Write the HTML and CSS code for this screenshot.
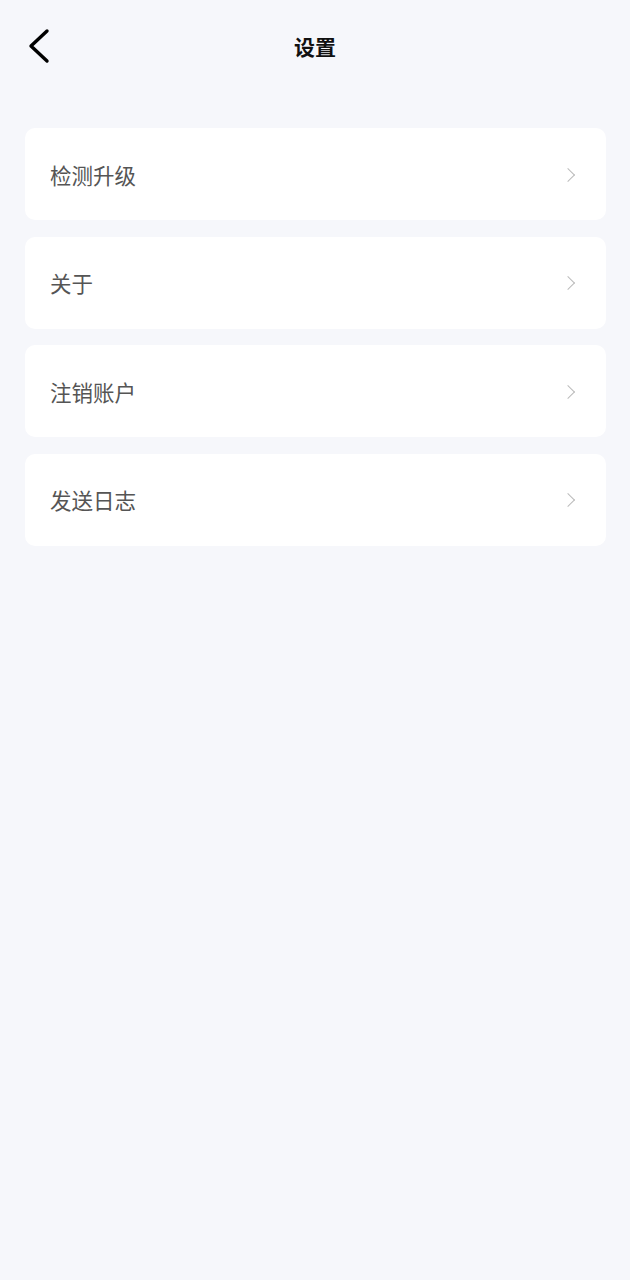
FILE: index.html
```html
<!DOCTYPE html>
<html lang="zh">
<head>
	<meta charset="UTF-8">
	<title>设置</title>
	<link rel="stylesheet" href="styles.css">
</head>
<body>
	<div class="header">
		<span class="back">
			<svg width="24" height="36" viewBox="0 0 24 36"><polyline points="19,3 3,18 19,33" fill="none" stroke="#000" stroke-width="3.4" stroke-linecap="round" stroke-linejoin="round"/></svg>
		</span>
		<h1 class="title">设置</h1>
	</div>

	<ul class="list">
		<li class="item"><span>检测升级</span><i class="arrow"></i></li>
		<li class="item"><span>关于</span><i class="arrow"></i></li>
		<li class="item"><span>注销账户</span><i class="arrow"></i></li>
		<li class="item"><span>发送日志</span><i class="arrow"></i></li>
	</ul>
</body>
</html>
```

FILE: styles.css
```css
*{
	margin: 0;
	padding: 0;
}
body{
	background: #f6f7fb;
	font-family: "Noto Sans CJK SC", "Noto Sans", sans-serif;
	width: 630px;
	height: 1280px;
}
.header{
	height: 96px;
	display: flex;
	align-items: center;
	justify-content: center;
	position: relative;
}
.back{
	position: absolute;
	left: 28px;
	top: 28px;
}
.back svg{
	display: block;
}
.title{
	font-size: 21px;
	font-weight: bold;
	color: #111;
	margin-top: -4px;
}
.list{
	list-style: none;
	padding: 32px 24px 0 25px;
	display: flex;
	flex-direction: column;
	gap: 16.5px;
}
.item{
	height: 92px;
	background: #fff;
	border-radius: 10px;
	display: flex;
	align-items: center;
	justify-content: space-between;
	padding: 0 33px 0 25px;
	font-size: 21.5px;
	color: #555;
}
.arrow{
	width: 9px;
	height: 9px;
	border-top: 1.6px solid #bbb;
	border-right: 1.6px solid #bbb;
	transform: rotate(45deg);
	margin-top: 1px;
}
```
